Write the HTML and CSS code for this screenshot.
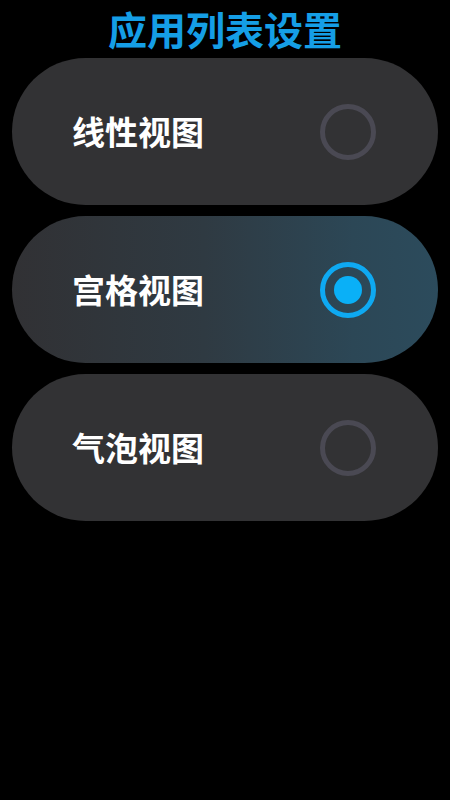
FILE: index.html
```html
<!DOCTYPE html>
<html lang="zh">
<head>
<meta charset="utf-8">
<link rel="stylesheet" href="styles.css">
</head>
<body>
<div class="page">
  <h1 class="title">应用列表设置</h1>
  <div class="list">
    <div class="item">
      <span class="label">线性视图</span>
      <span class="radio"></span>
    </div>
    <div class="item selected">
      <span class="label">宫格视图</span>
      <span class="radio checked"><span class="dot"></span></span>
    </div>
    <div class="item">
      <span class="label">气泡视图</span>
      <span class="radio"></span>
    </div>
  </div>
</div>
</body>
</html>
```

FILE: styles.css
```css
html, body {
  margin: 0;
  padding: 0;
  background: #000;
  height: 100%;
}
body {
  font-family: "Noto Sans CJK SC", "Noto Sans", sans-serif;
}
.page {
  display: flex;
  flex-direction: column;
}
.title {
  margin: 0;
  height: 58px;
  line-height: 56px;
  text-align: center;
  font-size: 39px;
  font-weight: 700;
  color: #159ee6;
  letter-spacing: 0;
}
.list {
  display: flex;
  flex-direction: column;
  gap: 11px;
  padding: 0 12px;
}
.item {
  height: 147px;
  border-radius: 74px;
  background: #323234;
  display: flex;
  align-items: center;
  justify-content: space-between;
  padding: 0 62px 0 60px;
}
.item.selected {
  background: linear-gradient(90deg, #313134 0%, #2f3a42 45%, #2c4756 80%, #2c4b5c 100%);
}
.label {
  color: #fff;
  font-size: 33px;
  font-weight: 700;
  line-height: 1;
}
.radio {
  width: 56px;
  height: 56px;
  box-sizing: border-box;
  border: 5px solid #4a4953;
  border-radius: 50%;
  display: flex;
  align-items: center;
  justify-content: center;
}
.radio.checked {
  border-color: #0ea9f2;
}
.dot {
  width: 28px;
  height: 28px;
  border-radius: 50%;
  background: #0ab0f7;
}
```
